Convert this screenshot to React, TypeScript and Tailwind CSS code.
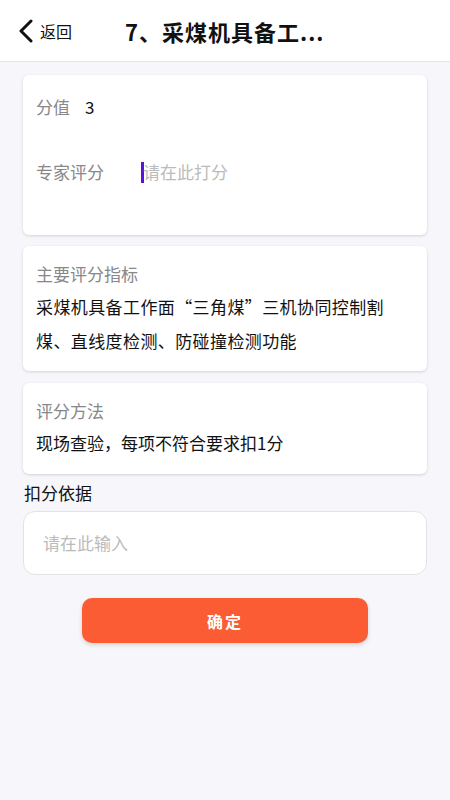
import React from 'react'

const font = { fontFamily: '"Noto Sans CJK SC", "Noto Sans", sans-serif' }

function Card({ children, className = '' }: { children: React.ReactNode; className?: string }) {
  return (
    <div className={`bg-white rounded-md shadow-[0_1px_3px_rgba(0,0,0,0.15)] px-[13px] ${className}`}>
      {children}
    </div>
  )
}

export default function App() {
  return (
    <div className="w-[450px] h-[800px] bg-[#f7f7fb] flex flex-col" style={font}>
      {/* Header */}
      <div className="h-[62px] bg-white border-b border-[#e6e6ea] flex items-center shrink-0">
        <div className="flex items-center pl-[18px] w-[125px]">
          <svg width="16" height="24" viewBox="0 0 16 24" className="mr-[6px]">
            <path d="M13 2 L3 12 L13 22" fill="none" stroke="#111" strokeWidth="3" strokeLinecap="round" strokeLinejoin="round" />
          </svg>
          <span className="text-[16px] text-[#111] leading-none">返回</span>
        </div>
        <div className="text-[22px] font-bold text-[#111] leading-none tracking-[1px]">7、采煤机具备工...</div>
      </div>

      {/* Content */}
      <div className="px-[23px] pt-[13px] flex flex-col">
        <Card className="h-[160px] flex flex-col">
          <div className="flex items-center h-[30px] mt-[17px] text-[17px]">
            <span className="text-[#888]">分值</span>
            <span className="ml-[15px] text-[#111]">3</span>
          </div>
          <div className="flex items-center h-[30px] mt-[35px] text-[17px]">
            <span className="text-[#888] w-[105px]">专家评分</span>
            <span className="w-[3px] h-[21px] bg-[#5b10e0] mr-[-1px]"></span>
            <span className="text-[#bbb]">请在此打分</span>
          </div>
        </Card>

        <Card className="mt-[11px] pt-[12px] pb-[13px]">
          <div className="text-[17px] text-[#888] leading-[32px]">主要评分指标</div>
          <div className="text-[17px] text-[#111] leading-[34px] pr-[24px] tracking-[0.4px]">
            采煤机具备工作面“三角煤”三机协同控制割煤、直线度检测、防碰撞检测功能
          </div>
        </Card>

        <Card className="mt-[12px] pt-[12px] pb-[15px]">
          <div className="text-[17px] text-[#888] leading-[32px]">评分方法</div>
          <div className="text-[17px] text-[#111] leading-[32px]">现场查验，每项不符合要求扣1分</div>
        </Card>

        <div className="mt-[7px] text-[17px] text-[#111] leading-[24px] pl-[1px]">扣分依据</div>

        <div className="mt-[6px] h-[64px] bg-white border border-[#e3e3e6] rounded-[12px] flex items-center pl-[19px]">
          <span className="text-[17px] text-[#bbb]">请在此输入</span>
        </div>

        <div className="flex justify-center mt-[23px]">
          <button className="w-[286px] h-[45px] rounded-[10px] bg-[#fc5c34] text-white text-[16px] font-bold tracking-[2px] shadow-[0_2px_4px_rgba(0,0,0,0.15)]">
            确定
          </button>
        </div>
      </div>
    </div>
  )
}
